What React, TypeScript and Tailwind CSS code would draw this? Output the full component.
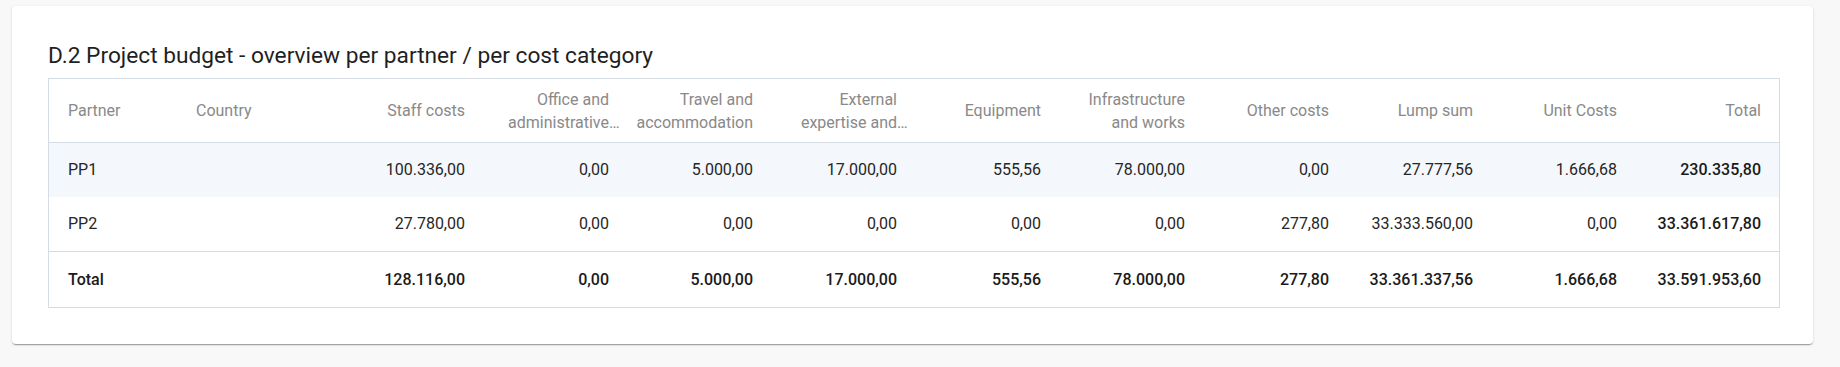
type Header = {
  lines: string[];
  align: "left" | "right";
  clipped?: boolean;
};

const headers: Header[] = [
  { lines: ["Partner"], align: "left" },
  { lines: ["Country"], align: "left" },
  { lines: ["Staff costs"], align: "right" },
  { lines: ["Office and", "administrative"], align: "right", clipped: true },
  { lines: ["Travel and", "accommodation"], align: "right" },
  { lines: ["External", "expertise and"], align: "right", clipped: true },
  { lines: ["Equipment"], align: "right" },
  { lines: ["Infrastructure", "and works"], align: "right" },
  { lines: ["Other costs"], align: "right" },
  { lines: ["Lump sum"], align: "right" },
  { lines: ["Unit Costs"], align: "right" },
  { lines: ["Total"], align: "right" },
];

const rows = [
  {
    partner: "PP1",
    country: "",
    values: ["100.336,00", "0,00", "5.000,00", "17.000,00", "555,56", "78.000,00", "0,00", "27.777,56", "1.666,68"],
    total: "230.335,80",
  },
  {
    partner: "PP2",
    country: "",
    values: ["27.780,00", "0,00", "0,00", "0,00", "0,00", "0,00", "277,80", "33.333.560,00", "0,00"],
    total: "33.361.617,80",
  },
];

const totals = {
  values: ["128.116,00", "0,00", "5.000,00", "17.000,00", "555,56", "78.000,00", "277,80", "33.361.337,56", "1.666,68"],
  total: "33.591.953,60",
};

const gridCols = "grid grid-cols-[128px_162px_repeat(10,144px)]";

const HeaderCell = ({ h }: { h: Header }) => {
  const last = h.lines.length - 1;
  return (
    <div
      className={
        h.align === "left"
          ? "flex flex-col justify-center pl-[19px] pr-[8px]"
          : "flex flex-col justify-center items-end pl-[8px] pr-[18px]"
      }
    >
      {h.lines.map((line, i) => (
        <span
          key={line}
          className="relative whitespace-nowrap text-[16px] leading-[23px] text-[#898989]"
        >
          {line}
          {h.clipped && i === last && <span className="absolute left-full top-0">…</span>}
        </span>
      ))}
    </div>
  );
};

const App = () => {
  return (
    <div
      className="min-h-[367px] bg-[#f8f8f8] pt-[6px] pl-[12px]"
      style={{ fontFamily: "Roboto, 'Liberation Sans', sans-serif" }}
    >
      <div className="w-[1801px] h-[338px] bg-white rounded-[4px] shadow-[0_2px_1px_-1px_rgba(0,0,0,0.2),0_1px_1px_0_rgba(0,0,0,0.14),0_1px_3px_0_rgba(0,0,0,0.12)] pt-[34px] pl-[36px] pr-[33px]">
        <h2 className="text-[22.7px] leading-[32px] font-normal text-[#1f1f1f] mb-[6px]">
          D.2 Project budget - overview per partner / per cost category
        </h2>

        <div className="w-[1732px] border border-[#d5dce3]">
          {/* header */}
          <div className={`${gridCols} h-[64px] border-b border-[#d5dce3]`}>
            {headers.map((h) => (
              <HeaderCell key={h.lines.join(" ")} h={h} />
            ))}
          </div>

          {/* partner rows */}
          {rows.map((r, i) => (
            <div
              key={r.partner}
              className={`${gridCols} text-[16px] text-[#262626] ${
                i === 0 ? "h-[54px] bg-[#f4f8fc]" : "h-[55px] border-b border-[#d5dce3]"
              }`}
            >
              <div className="flex items-center pl-[19px]">{r.partner}</div>
              <div className="flex items-center pl-[19px]">{r.country}</div>
              {r.values.map((v, j) => (
                <div key={j} className="flex items-center justify-end pr-[18px]">
                  {v}
                </div>
              ))}
              <div className="flex items-center justify-end pr-[18px] font-medium text-[#1a1a1a]">
                {r.total}
              </div>
            </div>
          ))}

          {/* total row */}
          <div className={`${gridCols} h-[55px] text-[16px] font-medium text-[#1a1a1a]`}>
            <div className="flex items-center pl-[19px]">Total</div>
            <div />
            {totals.values.map((v, j) => (
              <div key={j} className="flex items-center justify-end pr-[18px]">
                {v}
              </div>
            ))}
            <div className="flex items-center justify-end pr-[18px]">{totals.total}</div>
          </div>
        </div>
      </div>
    </div>
  );
};

export default App;
